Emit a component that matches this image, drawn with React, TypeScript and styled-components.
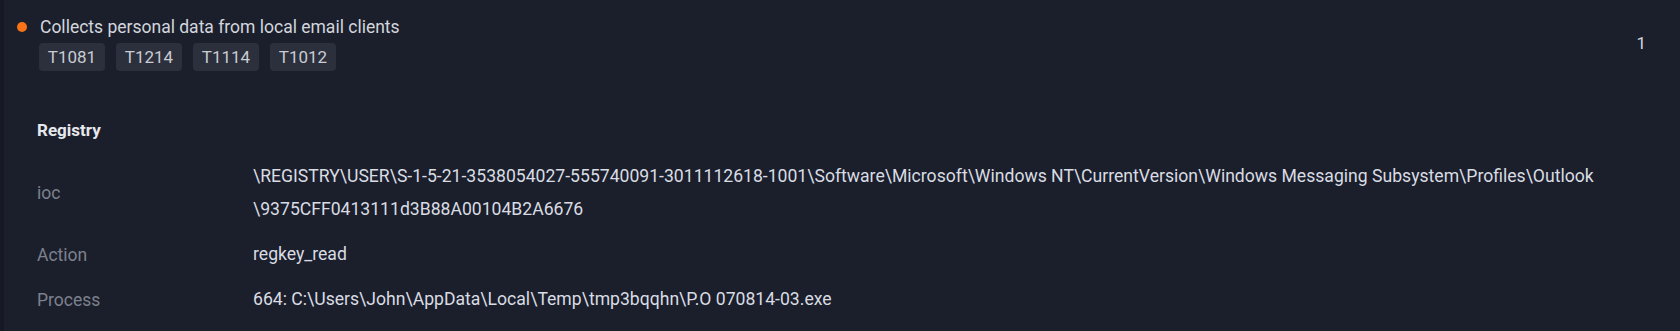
import { createGlobalStyle, styled } from "styled-components";

const GlobalStyle = createGlobalStyle`
  html, body {
    margin: 0;
    padding: 0;
    background: #1b1f2c;
  }
  body {
    font-family: Roboto, "Noto Sans", sans-serif;
    -webkit-font-smoothing: antialiased;
  }
`;

const signature = {
  title: "Collects personal data from local email clients",
  techniques: ["T1081", "T1214", "T1114", "T1012"],
  count: 1,
};

const details: { label: string; lines: string[] }[] = [
  {
    label: "ioc",
    lines: [
      "\\REGISTRY\\USER\\S-1-5-21-3538054027-555740091-3011112618-1001\\Software\\Microsoft\\Windows NT\\CurrentVersion\\Windows Messaging Subsystem\\Profiles\\Outlook",
      "\\9375CFF0413111d3B88A00104B2A6676",
    ],
  },
  { label: "Action", lines: ["regkey_read"] },
  {
    label: "Process",
    lines: ["664: C:\\Users\\John\\AppData\\Local\\Temp\\tmp3bqqhn\\P.O 070814-03.exe"],
  },
];

export default function App() {
  return (
    <>
      <GlobalStyle />
      <Panel>
        <Header>
          <HeaderMain>
            <TitleRow>
              <Dot />
              <Title>{signature.title}</Title>
            </TitleRow>
            <Tags>
              {signature.techniques.map((t) => (
                <Tag key={t}>{t}</Tag>
              ))}
            </Tags>
          </HeaderMain>
          <Count>{signature.count}</Count>
        </Header>

        <Section>
          <SectionTitle>Registry</SectionTitle>
          <DetailList>
            {details.map((d) => (
              <DetailRow key={d.label}>
                <Label>{d.label}</Label>
                <Value>
                  {d.lines.map((l, i) => (
                    <div key={i}>{l}</div>
                  ))}
                </Value>
              </DetailRow>
            ))}
          </DetailList>
        </Section>
      </Panel>
    </>
  );
}

const Panel = styled.div`
  width: 1680px;
  height: 331px;
  box-sizing: border-box;
  background: #1b1f2c;
  border-left: 4px solid #161925;
  overflow: hidden;
`;

const Header = styled.div`
  display: flex;
  flex-flow: row;
  align-items: center;
  padding: 14px 34px 0 13px;
`;

const HeaderMain = styled.div`
  flex-grow: 1;
  display: flex;
  flex-flow: column;
  gap: 3px;
`;

const TitleRow = styled.div`
  display: flex;
  flex-flow: row;
  align-items: center;
  gap: 13px;
  height: 26px;
`;

const Dot = styled.span`
  width: 10px;
  height: 10px;
  border-radius: 50%;
  background: #f97316;
  flex-shrink: 0;
`;

const Title = styled.div`
  font-size: 17.5px;
  line-height: 26px;
  color: #d3d6dd;
`;

const Tags = styled.div`
  display: flex;
  flex-flow: row;
  gap: 11px;
  padding-left: 22px;
`;

const Tag = styled.span`
  display: inline-flex;
  align-items: center;
  justify-content: center;
  width: 66px;
  height: 28px;
  box-sizing: border-box;
  border-radius: 4px;
  background: #2c303c;
  color: #c9ccd3;
  font-size: 17px;
`;

const Count = styled.div`
  font-size: 17px;
  color: #d3d6dd;
`;

const Section = styled.div`
  padding: 48px 0 0 33px;
`;

const SectionTitle = styled.div`
  font-size: 17px;
  font-weight: 700;
  line-height: 22px;
  color: #e6e8ec;
  margin-bottom: 13px;
`;

const DetailList = styled.div`
  display: flex;
  flex-flow: column;
`;

const DetailRow = styled.div`
  display: grid;
  grid-template-columns: 216px 1fr;
  align-items: center;
  padding: 6px 0;
`;

const Label = styled.div`
  font-size: 17.5px;
  color: #7c818c;
`;

const Value = styled.div`
  font-size: 17.6px;
  line-height: 33px;
  color: #d9dce2;
`;
